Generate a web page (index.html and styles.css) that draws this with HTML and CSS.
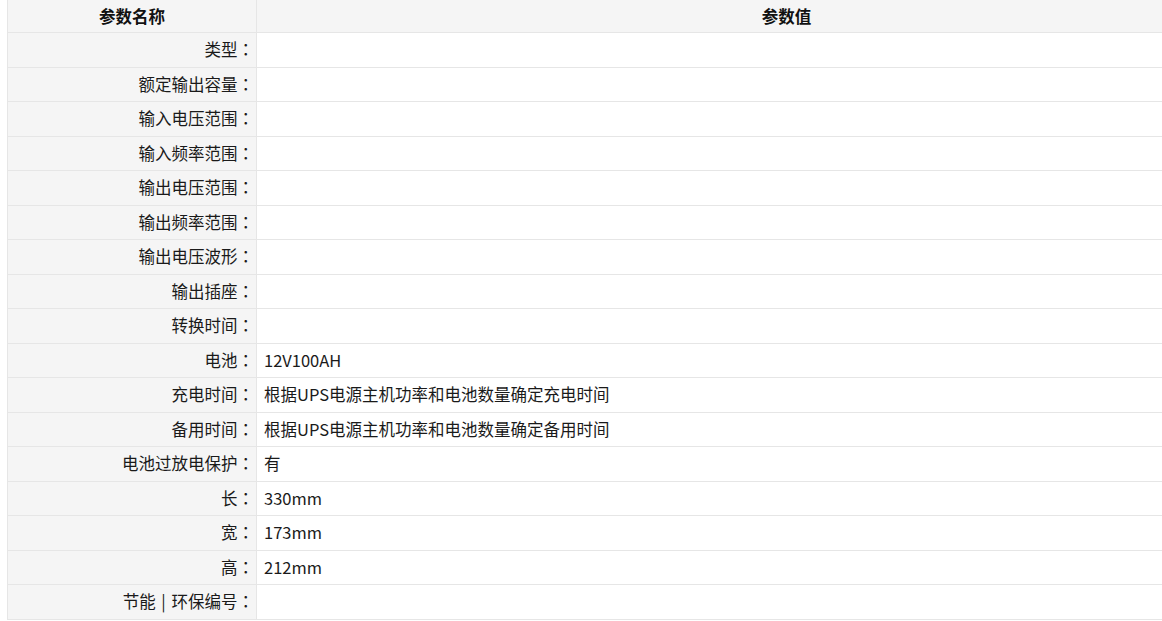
FILE: index.html
```html
<!DOCTYPE html>
<html lang="zh-CN">
<head>
<meta charset="utf-8">
<title>参数</title>
<link rel="stylesheet" href="styles.css">
</head>
<body>
<table class="spec">
  <thead>
    <tr><th class="name-col">参数名称</th><th class="val-col">参数值</th></tr>
  </thead>
  <tbody>
    <tr><td class="k">类型<span class="colon" lang="zh-Hant">：</span></td><td class="v"></td></tr>
    <tr><td class="k">额定输出容量<span class="colon" lang="zh-Hant">：</span></td><td class="v"></td></tr>
    <tr><td class="k">输入电压范围<span class="colon" lang="zh-Hant">：</span></td><td class="v"></td></tr>
    <tr><td class="k">输入频率范围<span class="colon" lang="zh-Hant">：</span></td><td class="v"></td></tr>
    <tr><td class="k">输出电压范围<span class="colon" lang="zh-Hant">：</span></td><td class="v"></td></tr>
    <tr><td class="k">输出频率范围<span class="colon" lang="zh-Hant">：</span></td><td class="v"></td></tr>
    <tr><td class="k">输出电压波形<span class="colon" lang="zh-Hant">：</span></td><td class="v"></td></tr>
    <tr><td class="k">输出插座<span class="colon" lang="zh-Hant">：</span></td><td class="v"></td></tr>
    <tr><td class="k">转换时间<span class="colon" lang="zh-Hant">：</span></td><td class="v"></td></tr>
    <tr><td class="k">电池<span class="colon" lang="zh-Hant">：</span></td><td class="v">12V100AH</td></tr>
    <tr><td class="k">充电时间<span class="colon" lang="zh-Hant">：</span></td><td class="v">根据UPS电源主机功率和电池数量确定充电时间</td></tr>
    <tr><td class="k">备用时间<span class="colon" lang="zh-Hant">：</span></td><td class="v">根据UPS电源主机功率和电池数量确定备用时间</td></tr>
    <tr><td class="k">电池过放电保护<span class="colon" lang="zh-Hant">：</span></td><td class="v">有</td></tr>
    <tr><td class="k">长<span class="colon" lang="zh-Hant">：</span></td><td class="v">330mm</td></tr>
    <tr><td class="k">宽<span class="colon" lang="zh-Hant">：</span></td><td class="v">173mm</td></tr>
    <tr><td class="k">高<span class="colon" lang="zh-Hant">：</span></td><td class="v">212mm</td></tr>
    <tr><td class="k">节能<span class="sep"> | </span>环保编号<span class="colon" lang="zh-Hant">：</span></td><td class="v"></td></tr>
  </tbody>
</table>
</body>
</html>
```
FILE: styles.css
```css
html, body {
  margin: 0;
  padding: 0;
  overflow: hidden;
  background: #fff;
}
body {
  font-family: "Noto Sans CJK SC", "Noto Sans", sans-serif;
  font-size: 16.5px;
  color: #1a1a1a;
  text-spacing-trim: space-all;
}
.spec {
  border-collapse: collapse;
  table-layout: fixed;
  width: 1310px;
  margin-left: 7px;
}
.spec th {
  background: #f5f5f5;
  font-weight: bold;
  color: #111;
  text-align: center;
  height: 32px;
  line-height: 32px;
  padding: 0;
  border: 1px solid #e6e6e6;
  border-top: 0;
}
.spec .name-col { width: 248px; }
.spec td {
  padding: 0;
  height: 33.5px;
  line-height: 33.5px;
  border: 1px solid #e6e6e6;
  white-space: nowrap;
}
.spec td.k {
  background: #f5f5f5;
  text-align: right;
  padding-right: 2px;
}
.spec td.v {
  background: #fff;
  text-align: left;
  padding-left: 7px;
}
.colon {
  font-family: "Noto Sans CJK TC", "Noto Sans CJK JP", sans-serif;
  text-spacing-trim: space-all;
}
.sep {
  word-spacing: 2px;
}
```
